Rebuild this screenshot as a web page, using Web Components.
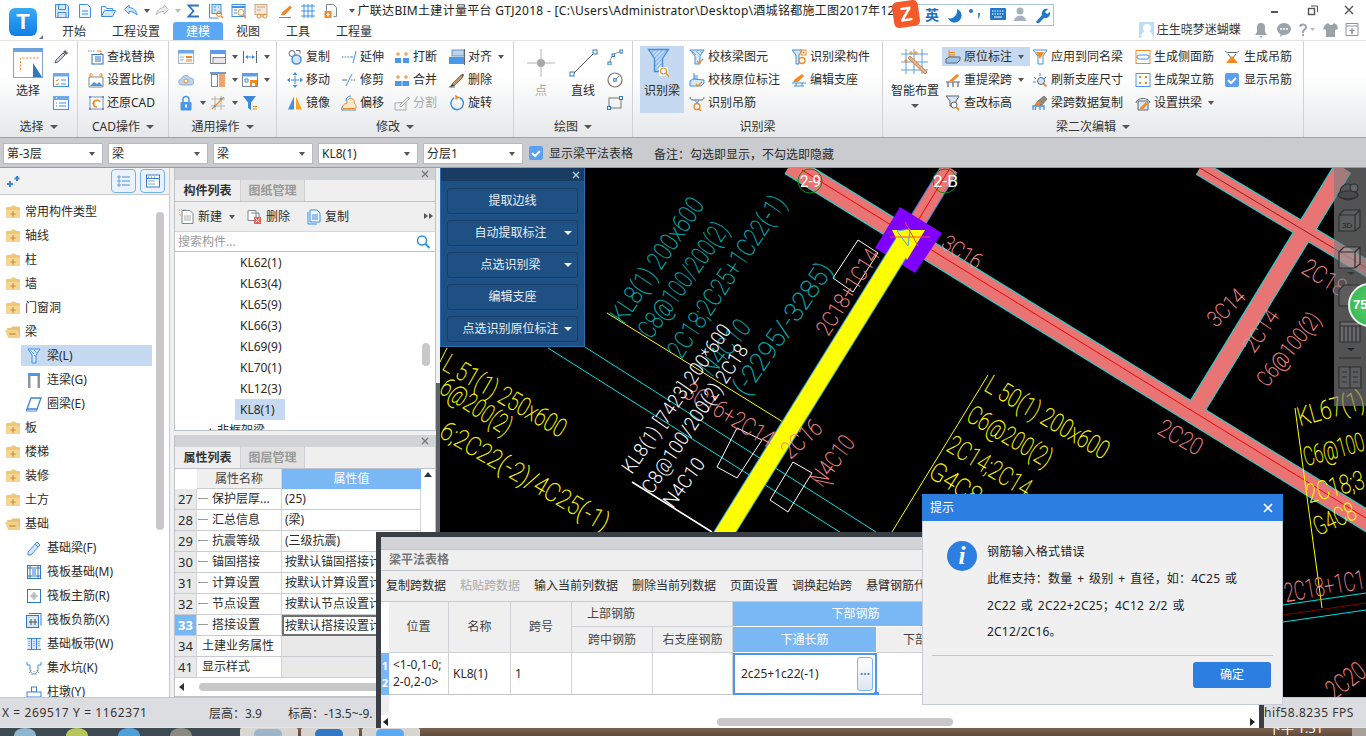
<!DOCTYPE html>
<html lang="zh">
<head>
<meta charset="utf-8">
<title>GTJ2018</title>
<style>
  html,body{margin:0;padding:0;width:1366px;height:736px;overflow:hidden;background:#dcdde0;}
  body{position:relative;font:12px/16px "Noto Sans","Noto Sans CJK SC",sans-serif;color:#2b2b2b;}
</style>
</head>
<body>
<gtj-app>
  <gtj-title-bar slot="top"></gtj-title-bar>
  <gtj-ribbon slot="top">
    <rb-group label="选择" arrow w="78">
      <rb-big icon="sel" label="选择" style="margin-left:6px;width:44px"></rb-big>
      <rb-col style="margin-left:3px;width:24px">
        <rb-item icon="pick"></rb-item><rb-item icon="chk"></rb-item><rb-item icon="lst"></rb-item>
      </rb-col>
    </rb-group>
    <rb-group label="CAD操作" arrow w="91">
      <rb-col style="margin-left:10px;width:80px">
        <rb-item icon="find" label="查找替换"></rb-item><rb-item icon="scale" label="设置比例"></rb-item><rb-item icon="restore" label="还原CAD"></rb-item>
      </rb-col>
    </rb-group>
    <rb-group label="通用操作" arrow w="108">
      <rb-col style="margin-left:9px;width:32px">
        <rb-item icon="panel"></rb-item><rb-item icon="cloud"></rb-item><rb-item icon="lock" arrow></rb-item>
      </rb-col>
      <rb-col style="width:32px">
        <rb-item icon="win2" arrow></rb-item><rb-item icon="col2" arrow></rb-item><rb-item icon="cross" arrow></rb-item>
      </rb-col>
      <rb-col style="width:32px">
        <rb-item icon="dim" arrow></rb-item><rb-item icon="savew" arrow></rb-item><rb-item icon="filter"></rb-item>
      </rb-col>
    </rb-group>
    <rb-group label="修改" arrow w="237">
      <rb-col style="margin-left:10px;width:54px">
        <rb-item icon="copy" label="复制"></rb-item><rb-item icon="move" label="移动"></rb-item><rb-item icon="mirror" label="镜像"></rb-item>
      </rb-col>
      <rb-col style="width:53px">
        <rb-item icon="extend" label="延伸"></rb-item><rb-item icon="trim" label="修剪"></rb-item><rb-item icon="offset" label="偏移"></rb-item>
      </rb-col>
      <rb-col style="width:55px">
        <rb-item icon="brk" label="打断"></rb-item><rb-item icon="merge" label="合并"></rb-item><rb-item icon="split" label="分割" disabled></rb-item>
      </rb-col>
      <rb-col style="width:60px">
        <rb-item icon="align" label="对齐" arrow></rb-item><rb-item icon="del" label="删除"></rb-item><rb-item icon="rot" label="旋转"></rb-item>
      </rb-col>
    </rb-group>
    <rb-group label="绘图" arrow w="119">
      <rb-big icon="point" label="点" disabled style="margin-left:6px;width:42px"></rb-big>
      <rb-big icon="line" label="直线" style="width:42px"></rb-big>
      <rb-col style="margin-left:3px;width:24px">
        <rb-item icon="arc"></rb-item><rb-item icon="circ"></rb-item><rb-item icon="rect"></rb-item>
      </rb-col>
    </rb-group>
    <rb-group label="识别梁" w="250">
      <rb-big icon="beamfind" label="识别梁" active style="margin-left:7px;width:44px"></rb-big>
      <rb-col style="margin-left:5px;width:102px">
        <rb-item icon="chkbeam" label="校核梁图元"></rb-item><rb-item icon="chkmark" label="校核原位标注"></rb-item><rb-item icon="hang" label="识别吊筋"></rb-item>
      </rb-col>
      <rb-col style="width:90px">
        <rb-item icon="beamcomp" label="识别梁构件"></rb-item><rb-item icon="seat" label="编辑支座"></rb-item>
      </rb-col>
    </rb-group>
    <rb-group label="梁二次编辑" arrow w="421">
      <rb-big icon="smart" label="智能布置" arrow style="margin-left:8px;width:48px"></rb-big>
      <rb-col style="margin-left:3px;width:90px">
        <rb-item icon="mark" label="原位标注" arrow active pad></rb-item><rb-item icon="respan" label="重提梁跨" arrow pad></rb-item><rb-item icon="elev" label="查改标高" pad></rb-item>
      </rb-col>
      <rb-col style="width:103px">
        <rb-item icon="apply" label="应用到同名梁"></rb-item><rb-item icon="refresh" label="刷新支座尺寸"></rb-item><rb-item icon="brush" label="梁跨数据复制"></rb-item>
      </rb-col>
      <rb-col style="width:89px">
        <rb-item icon="side" label="生成侧面筋"></rb-item><rb-item icon="stand" label="生成架立筋"></rb-item><rb-item icon="arch" label="设置拱梁" arrow></rb-item>
      </rb-col>
      <rb-col style="width:76px">
        <rb-item icon="hang2" label="生成吊筋" gap="4"></rb-item><rb-item icon="check" label="显示吊筋" gap="4"></rb-item>
      </rb-col>
    </rb-group>
  </gtj-ribbon>
  <gtj-filter-bar slot="top">
    <gtj-combo>第-3层</gtj-combo><gtj-combo>梁</gtj-combo><gtj-combo>梁</gtj-combo><gtj-combo>KL8(1)</gtj-combo><gtj-combo>分层1</gtj-combo>
  </gtj-filter-bar>

  <gtj-tree slot="left">
    <gtj-tree-row icon="fold">常用构件类型</gtj-tree-row>
    <gtj-tree-row icon="fold">轴线</gtj-tree-row>
    <gtj-tree-row icon="fold">柱</gtj-tree-row>
    <gtj-tree-row icon="fold">墙</gtj-tree-row>
    <gtj-tree-row icon="fold">门窗洞</gtj-tree-row>
    <gtj-tree-row icon="foldo">梁</gtj-tree-row>
    <gtj-tree-row icon="t-beam" sub active>梁(L)</gtj-tree-row>
    <gtj-tree-row icon="t-link" sub>连梁(G)</gtj-tree-row>
    <gtj-tree-row icon="t-ring" sub>圈梁(E)</gtj-tree-row>
    <gtj-tree-row icon="fold">板</gtj-tree-row>
    <gtj-tree-row icon="fold">楼梯</gtj-tree-row>
    <gtj-tree-row icon="fold">装修</gtj-tree-row>
    <gtj-tree-row icon="fold">土方</gtj-tree-row>
    <gtj-tree-row icon="foldo">基础</gtj-tree-row>
    <gtj-tree-row icon="t-fb" sub>基础梁(F)</gtj-tree-row>
    <gtj-tree-row icon="t-raft" sub>筏板基础(M)</gtj-tree-row>
    <gtj-tree-row icon="t-main" sub>筏板主筋(R)</gtj-tree-row>
    <gtj-tree-row icon="t-neg" sub>筏板负筋(X)</gtj-tree-row>
    <gtj-tree-row icon="t-band" sub>基础板带(W)</gtj-tree-row>
    <gtj-tree-row icon="t-pit" sub>集水坑(K)</gtj-tree-row>
    <gtj-tree-row icon="t-pier" sub>柱墩(Y)</gtj-tree-row>
  </gtj-tree>

  <gtj-side slot="mid">
    <gtj-comp-panel></gtj-comp-panel>
    <gtj-prop-panel></gtj-prop-panel>
  </gtj-side>

  <gtj-canvas slot="canvas">
    <gtj-tool-panel></gtj-tool-panel>
    <gtj-view-bar></gtj-view-bar>
  </gtj-canvas>

  <gtj-status slot="status"></gtj-status>
  <gtj-taskbar slot="task"></gtj-taskbar>

  <gtj-ime slot="over"></gtj-ime>
  <gtj-table-window slot="over"></gtj-table-window>
  <gtj-dialog slot="over"></gtj-dialog>
</gtj-app>

<script>
const B='#3f8fe6',O='#f5891f',G='#7b8794',LB='#d6e6f9',D='#5c6670';
const ICONS={
  save:`<path d="M1.5 1.5h11l2 2v11h-13z" fill="${LB}" stroke="${B}"/><path d="M4.5 1.5v5h7v-5M4 14.5v-5h8v5" stroke="${B}"/>`,
  newf:`<path d="M2.5 1.5h8l3 3v10h-11z" fill="#eef5fd" stroke="${B}"/><path d="M5 8h6M5 11h6" stroke="${B}"/>`,
  open:`<path d="M1.5 13.5v-10h4l1 2h6v2" stroke="${B}"/><path d="M1.5 13.5l3-6h11l-3 6z" fill="${LB}" stroke="${B}"/>`,
  undo:`<path d="M6 2L1.5 6.5 6 11V8.5c3 0 5 .5 8 3.5C13.5 8 10.5 4.7 6 4.5z" fill="${LB}" stroke="${B}"/>`,
  redo:`<path d="M10 2l4.5 4.5L10 11V8.5c-3 0-5 .5-8 3.5C2.500 8 5.500 4.7 10 4.500z" fill="#eee" stroke="#bbb"/>`,
  sigma:`<path d="M13 3.500V2.500H3.500L8.500 8l-5 5.500H13V12.500" stroke="#2f6fc0" stroke-width="1.800"/>`,
  qa1:`<path d="M1.500 1v14h9" stroke="${B}"/><rect x="4" y="1.500" width="9" height="9" fill="${LB}" stroke="${B}"/><path d="M6 4h2M6 7h2M10 4h1" stroke="${B}"/><circle cx="11" cy="11" r="2.500" stroke="${O}"/><path d="M13 13l2 2" stroke="${O}" stroke-width="1.500"/>`,
  qa2:`<rect x="1" y="1.500" width="13" height="12" fill="#fff" stroke="${B}"/><path d="M1 4h13" stroke="${B}" stroke-width="2"/><path d="M3 7h3M3 10h3" stroke="${B}"/><circle cx="10" cy="9.500" r="3" stroke="${O}"/><path d="M12 12l3 3" stroke="${O}" stroke-width="1.500"/>`,
  qa3:`<rect x="1" y="1.500" width="12" height="10" fill="#f6e9dc" stroke="#c9a78a"/><path d="M3 4h8M3 7h4" stroke="#c9a78a"/><circle cx="5" cy="13" r="2" stroke="${O}"/><circle cx="11" cy="13" r="2" stroke="${O}"/><path d="M7 13h2" stroke="${O}"/>`,
  pen:`<path d="M2 14.500h12" stroke="${G}"/><path d="M4 12l2-3 7-6 1.500 1.500-6.500 7z" fill="${O}" stroke="#c5651a" stroke-width=".5"/>`,
  gridq:`<path d="M1 3h14M1 8h14M1 13h14M4 1v14M8 1v14M12 1v14" stroke="${B}"/>`,
  addf:`<path d="M3.500 1.500h7l3 3v9h-3M3.500 8V1.500" stroke="${G}"/><rect x="1.500" y="8" width="7" height="7" fill="${O}"/><path d="M5 9.500v4M3 11.500h4" stroke="#fff" stroke-width="1.200"/>`,

  sel:`<rect x=".5" y=".5" width="29" height="29" fill="#fff" stroke="#7da7d6"/><rect x="0" y="0" width="30" height="4" fill="#6ea3dc"/><path d="M7.500 22V10H26" stroke="${O}" stroke-dasharray="2 1.500"/><path d="M20 15v14h9z" fill="#2f79c4"/>`,
  pick:`<path d="M2 14l1-3 7-7 2 2-7 7z" fill="#cfd4d9" stroke="${D}"/><path d="M10 3l2-2 3 3-2 2z" fill="${D}"/>`,
  chk:`<rect x=".5" y="1.500" width="15" height="13" fill="#fff" stroke="${B}"/><rect x="0" y="1" width="16" height="3.500" fill="#6ea9e8"/><path d="M3 8l1 1 1.500-2M3 12l1 1 1.500-2" stroke="${O}"/><path d="M8 8h5M8 12h5" stroke="${B}"/>`,
  lst:`<rect x=".5" y="1.500" width="15" height="13" fill="#fff" stroke="${B}"/><rect x="0" y="1" width="16" height="4" fill="#6ea9e8"/><path d="M3 8h1M3 11h1M6 8h7M6 11h7" stroke="${B}"/><path d="M3 3h1" stroke="#fff"/>`,
  find:`<path d="M0 2h7" stroke="${G}" stroke-dasharray="1.500 1"/><rect x="4" y="5.500" width="11" height="9.500" fill="#fff" stroke="#2f6fc0"/><path d="M7 8h6M7 10h6M7 12h6" stroke="#2f6fc0"/><path d="M9 2h4v3" stroke="${O}"/><path d="M11.500 4l1.500 2 1.500-2z" fill="${O}"/>`,
  scale:`<path d="M1 5h14v10H1z" fill="#fff" stroke="${G}"/><path d="M2 14l4-4 3 2 2-2 4 4z" fill="#4d94e0"/><path d="M2 3h3M14 3h-3M3.500 1l-2 2 2 2M12.500 1l2 2-2 2" stroke="${O}"/>`,
  restore:`<rect x="2" y="2" width="13" height="12" fill="#fff" stroke="#6c91bd"/><path d="M1 1h2v2H1zM14 1h2v2h-2zM1 13h2v2H1zM14 13h2v2h-2z" fill="#6c91bd"/><path d="M12 7a3.500 3.500 0 1 0-3 5" stroke="${O}" stroke-width="1.500"/><path d="M4 9l3 .5L6 6z" fill="${O}"/>`,
  panel:`<rect x=".5" y="1.500" width="15" height="13" fill="#f8f9fa" stroke="#a6b8cc"/><rect x="0" y="1" width="16" height="3.500" fill="#6ea9e8"/><rect x="8" y="7" width="6" height="2" fill="${O}"/><rect x="8" y="10" width="6" height="3" fill="#f2c28a"/><path d="M2 8h4M2 11h4" stroke="#a6b8cc"/>`,
  cloud:`<path d="M4 13a3 3 0 0 1-.5-6A4.500 4.500 0 0 1 12 6a3.500 3.500 0 0 1 1 7z" fill="#b9d4f2" stroke="#8ab2dd"/><circle cx="8" cy="9" r="2" fill="#fff" stroke="${O}"/>`,
  lock:`<rect x="2.500" y="7" width="11" height="8.500" rx="1" fill="#4a98ea"/><path d="M5 7V4.500a3 3 0 0 1 6 0V7" stroke="#4a98ea" stroke-width="1.500"/><rect x="7" y="9.500" width="2" height="3" fill="#fff"/>`,
  win2:`<rect x=".5" y="1.500" width="15" height="13" fill="#fff" stroke="#7d8792"/><rect x="0" y="1" width="16" height="4" fill="#5c9fe8"/><rect x="3" y="8.500" width="12.500" height="6" fill="#e6e8ea" stroke="#7d8792"/>`,
  col2:`<path d="M0 1h16" stroke="#3c78c0" stroke-width="1.500"/><rect x="1.500" y="2.500" width="6" height="12" fill="#fff" stroke="#7d8792"/><rect x="9" y="2" width="6" height="13" fill="#f2a36b"/>`,
  cross:`<path d="M1 4h14M1 11h14M5 1v14M11 1v14" stroke="#bcb2a8"/><path d="M2 14L14 2" stroke="${O}" stroke-width="1.300"/><circle cx="5" cy="11" r="1.300" fill="#5c9fe8"/><circle cx="11" cy="4" r="1.300" fill="#5c9fe8"/>`,
  dim:`<path d="M1.500 2v12M14.500 2v12" stroke="${D}"/><path d="M4 8h8" stroke="${B}"/><path d="M6 6l-3 2 3 2zM10 6l3 2-3 2z" fill="${B}"/>`,
  savew:`<rect x=".5" y="1.500" width="15" height="13" fill="#fff" stroke="#7d8792"/><rect x="0" y="1" width="16" height="3.500" fill="#5c9fe8"/><path d="M3 7h3v3H3z" stroke="${B}"/><rect x="8" y="8" width="7" height="6" fill="${O}"/><rect x="10" y="11" width="3" height="3" fill="#fff"/>`,
  filter:`<path d="M1 1h13L9 7.500V15l-3-2V7.500z" fill="#3c88dc"/><path d="M11 11.500h4M11 14h4" stroke="${O}" stroke-width="1.200"/>`,
  copy:`<circle cx="5" cy="4.500" r="3" fill="#fff" stroke="${D}"/><circle cx="9.500" cy="10.500" r="4.500" fill="${LB}" stroke="${B}" stroke-width="1.500"/><path d="M9 1.500h4v3" stroke="${D}"/>`,
  move:`<path d="M8 4v8M4 8h8" stroke="${B}"/><path d="M8 0l2.500 3h-5zM8 16l2.500-3h-5zM0 8l3-2.500v5zM16 8l-3-2.500v5z" fill="${B}"/>`,
  mirror:`<path d="M7 1.500v13H1z" fill="#3f8fe6"/><path d="M9 1.500v13h6z" fill="#f5a623"/><path d="M8 0v16" stroke="#fff"/>`,
  extend:`<path d="M1 8h8" stroke="${D}" stroke-dasharray="1.500 1.200"/><path d="M9 8h3" stroke="${B}"/><path d="M15 2l-3 12" stroke="${B}"/>`,
  trim:`<path d="M1 8h5" stroke="${D}"/><path d="M10 8h5" stroke="${D}" stroke-dasharray="1.500 1.200"/><path d="M5 14L11 2" stroke="${B}"/>`,
  offset:`<path d="M2 13.500c-1-3 1-5 4-5 -1-5 5-7 7-3 .5 1 0 2 0 3 2 0 3 5 1 5z" fill="#fdeacb" stroke="${O}"/><path d="M1 15h14" stroke="${B}"/><path d="M1 15c-1-2 0-3 1-4M5 6c0-3 2-5 5-5" stroke="${B}"/>`,
  brk:`<rect x="1" y="9" width="6" height="5" fill="#4a98ea"/><rect x="9" y="9" width="6" height="5" fill="#4a98ea"/><path d="M4 3v4M2 5h4M12 3v4M10 5h4" stroke="${O}"/>`,
  merge:`<rect x="1" y="9" width="14" height="5" fill="#4a98ea"/><path d="M8 9v5" stroke="#cfe2f8"/><path d="M4 3v4M2 5h4M12 3v4M10 5h4" stroke="${O}"/>`,
  split:`<path d="M1 15V8l11-1v8z" fill="#f2f2f2" stroke="#aaa"/><path d="M6 10l8-8 1.500 1.500-8 8H6z" fill="#eee" stroke="#aaa"/>`,
  align:`<rect x="3" y="1" width="12" height="6" fill="#bcd3ee" stroke="#6c91bd"/><rect x="0" y="8" width="15" height="7" fill="#4a98ea"/><path d="M15.500 0v16" stroke="${D}"/>`,
  del:`<path d="M0 15h6" stroke="${D}"/><path d="M3 12l9-9 2 2-9 9z" fill="#c4915e" stroke="#7a5634" stroke-width=".7"/><path d="M1 15l2-3 2 2z" fill="#333"/><path d="M12 3l1.500-1.500 1.500 1.500L14 5z" fill="#555"/>`,
  rot:`<path d="M10.500 2.500a6.300 6.300 0 1 1-5.500 .4" stroke="#3f8fe6" stroke-width="1.500"/><path d="M6 0l5 2.500-4.500 2z" fill="${O}"/>`,
  point:`<path d="M15 1v28M1 15h28" stroke="#b4b4b4"/><circle cx="15" cy="15" r="4" fill="#a8a8a8"/>`,
  line:`<path d="M4.500 26.500L26.500 4.500" stroke="#555"/><rect x="2" y="24" width="4" height="4" fill="#fff" stroke="#2f79c4"/><rect x="25" y="2" width="4" height="4" fill="#fff" stroke="#2f79c4"/>`,
  arc:`<path d="M3 14c0-6 5-11 11-11" stroke="#888"/><rect x="1" y="13" width="3" height="3" fill="#fff" stroke="#2f79c4"/><rect x="13" y="1" width="3" height="3" fill="#fff" stroke="#2f79c4"/><rect x="5" y="5" width="2.500" height="2.500" fill="#fff" stroke="#2f79c4"/>`,
  circ:`<circle cx="8" cy="8" r="7" fill="#fff" stroke="#777" stroke-width="1.200"/><path d="M8 8l4-4" stroke="#777"/><rect x="6.700" y="6.700" width="2.500" height="2.500" fill="#fff" stroke="#2f79c4"/>`,
  rect:`<rect x="2" y="3" width="12" height="10" stroke="#777"/><rect x=".5" y="11.500" width="3" height="3" fill="#fff" stroke="#2f79c4"/><rect x="12.500" y="1.500" width="3" height="3" fill="#fff" stroke="#2f79c4"/>`,
  beamfind:`<defs><pattern id="h" width="3" height="3" patternUnits="userSpaceOnUse" patternTransform="rotate(45)"><path d="M0 0v3" stroke="${B}"/></pattern></defs><path d="M1.500 1.500h20l-6 9v13h-8v-13z" fill="url(#h)" stroke="${B}" stroke-width="1.300"/><rect x="12" y="19" width="9" height="9" fill="#fff"/><circle cx="16.500" cy="23" r="3" stroke="${O}" stroke-width="1.200"/><path d="M19 25.500l3 3" stroke="${O}" stroke-width="1.500"/>`,
  chkbeam:`<path d="M1 1h14l-4 6v8H6V7z" fill="${LB}" stroke="${B}"/><path d="M3 2l4 4M7 2l4 4M11 2l2 2" stroke="${B}" stroke-width=".7"/><path d="M8 12l2 2 4-4" stroke="${O}" stroke-width="1.300"/>`,
  chkmark:`<path d="M5 1v7h7M5 4h4M5 6h4" stroke="${B}"/><path d="M1 9l3-2 11 1v3l-3 3H1z" fill="${LB}" stroke="${B}"/><path d="M7 12l2 2 4-4" stroke="${O}" stroke-width="1.300"/>`,
  hang:`<path d="M1 2c0 2 1 3 3 3h8c2 0 3-1 3-3" stroke="${D}"/><path d="M6 5l2 3 2-3" stroke="${B}"/><circle cx="8" cy="11.500" r="3" stroke="${O}" stroke-width="1.300"/><path d="M10 14l2 2" stroke="${O}" stroke-width="1.500"/>`,
  beamcomp:`<path d="M1 1h10l-3 5v9H5V6z" fill="${LB}" stroke="${B}"/><rect x="10" y="1" width="5" height="5" stroke="${O}"/><rect x="12" y="3" width="1" height="1" stroke="${O}"/><circle cx="11" cy="11.500" r="3" fill="#fff" stroke="${O}" stroke-width="1.300"/>`,
  seat:`<path d="M1 11h14M3 14h10" stroke="${B}"/><path d="M2 10l2-3 7-5 2 2-6 6z" fill="${O}"/><path d="M5 11v3M11 11v3" stroke="${B}"/>`,
  smart:`<path d="M6 1v25M14 1v25M22 1v25M1 6h27M1 14h27M1 22h27" stroke="#5c9fe8"/><path d="M10 8l17 16-2 2L8 10z" fill="#f5b27c" stroke="#a7663a" stroke-width=".7"/><path d="M11 3v4M9 5h4M6 11v4M4 13h4M16 3v4M14 5h4" stroke="${O}"/>`,
  mark:`<path d="M4 1v7h7M4 3.500h6M4 6h6" stroke="${O}"/><path d="M1 10l3-2h11v3l-3 3H1z" fill="#9fc4ec" stroke="${D}"/>`,
  respan:`<path d="M1 10h14M3 10v5M8 10v5M13 10v5" stroke="${D}" stroke-width="1.200"/><path d="M4 9l8-7 2 2-7 6z" fill="${O}"/>`,
  elev:`<path d="M1 1h13l-3 5v5H5V6z" fill="${LB}" stroke="${D}"/><circle cx="9" cy="10" r="3" fill="#fff" stroke="${D}"/><path d="M11 12l3 3" stroke="${O}" stroke-width="2"/>`,
  apply:`<path d="M1 1h14l-4 6v8H6V7z" fill="#fff" stroke="${B}"/><path d="M4 3h8L8 10z" fill="${O}"/>`,
  refresh:`<circle cx="9" cy="9" r="3.500" fill="${LB}" stroke="${D}"/><path d="M11.500 11.500l3 3" stroke="${O}" stroke-width="1.800"/><path d="M8 1v3M2 5l2 2M14 5l-2 2M1 10h3" stroke="${B}"/>`,
  brush:`<path d="M1 15v-4h11v4M3.500 15v-3M8 15v-3" stroke="${B}" stroke-width="1.300"/><path d="M3 10l3-4 6-5 3 3-5 6z" fill="#9a8a7a" stroke="#555" stroke-width=".6"/><path d="M3 10l3-4 3 3-3 2z" fill="${O}"/>`,
  side:`<rect x="1" y="1.500" width="14" height="13" stroke="${O}"/><path d="M4 6h8M4 10h8M4 6a1 1 0 0 0 0 4M12 6a1 1 0 0 1 0 4" stroke="${B}"/>`,
  stand:`<rect x="1" y="1.500" width="14" height="13" stroke="#4a98ea"/><path d="M4 4h2v2H4zM10 4h2v2h-2zM4 10h2v2H4zM10 10h2v2h-2z" fill="${O}"/>`,
  arch:`<path d="M1 8C1 2 15 2 15 8" stroke="${D}"/><path d="M3 6h10v9H3z" fill="${LB}" stroke="${D}"/><path d="M5 13l6-6 2 2-5 5H5z" fill="${O}"/>`,
  hang2:`<path d="M1 2c1 1 2 1.500 3 1.500h8c1 0 2-.5 3-1.500" stroke="${D}"/><path d="M4 5l4 5 4-5" stroke="${D}"/><path d="M2 14h12L8 7z" fill="${O}"/>`,
  check:`<rect x="1" y="1" width="14" height="14" rx="2" fill="#5a9ff0"/><path d="M4 8l3 3 5-5" stroke="#fff" stroke-width="2"/>`,

  fold:`<path d="M1 4.500c0-1 .5-1.500 1.500-1.500H6l1-1.500h3L11 3h2.500c1 0 1.500 .5 1.500 1.500V14H1z" fill="#f0c878"/><path d="M1 6h14v8H1z" fill="#f5d592"/><path d="M8 7.500v5M5.500 10h5" stroke="#c28f38" stroke-width="1.200"/>`,
  foldo:`<path d="M2 4h4l1-1.500h8V13H3z" fill="#e9c176"/><path d="M0 6h13l2 8H3z" fill="#f3d08a"/><path d="M4.500 10h6" stroke="#c28f38" stroke-width="1.300"/>`,
  't-beam':`<path d="M2 1h12l-4 6v8H6V7z" fill="${LB}" stroke="${B}"/><path d="M4 2l4 4M8 2l3 3M8 7l2 2" stroke="${B}" stroke-width=".7"/>`,
  't-link':`<rect x="2" y="1" width="12" height="3" fill="#4a98ea"/><rect x="2" y="4" width="2.500" height="12" fill="#8c949c"/><rect x="11.500" y="4" width="2.500" height="12" fill="#8c949c"/>`,
  't-ring':`<path d="M5 2h10l-4 11H1z" fill="#fff" stroke="#3c84d2" stroke-width="1.300"/><path d="M1 13l-.5 2h10l.5-2" stroke="#3c84d2"/>`,
  't-fb':`<path d="M2 12L11 2l3 3-9 10H2z" fill="${LB}" stroke="${B}"/><path d="M9 4l3 3" stroke="${B}"/>`,
  't-raft':`<rect x="1.500" y="1.500" width="13" height="13" stroke="#2f79c4"/><path d="M1.500 4h13M1.500 12h13M4 1.500v13M12 1.500v13M6 6h4M6 8h4M6 10h4" stroke="#2f79c4"/>`,
  't-main':`<rect x="1.500" y="1.500" width="13" height="13" stroke="#2f79c4"/><path d="M8 4v8M4 8h8" stroke="#999"/><path d="M6 6h4v4H6z" stroke="#bbb"/>`,
  't-neg':`<rect x=".5" y="3.500" width="12" height="12" fill="${LB}" stroke="#2f79c4"/><path d="M3 1.500h12v12" stroke="#2f79c4"/><path d="M5 7v6M9 7v6M3 10h8" stroke="#555"/>`,
  't-band':`<rect x="1.500" y="2.500" width="13" height="11" fill="${LB}"/><path d="M1 2.500h14M1 13.500h14M5.500 3v10M10.500 3v10" stroke="#3c84d2"/><path d="M3 5v6M8 5v6M13 5v6" stroke="#3c84d2" stroke-dasharray="1 1"/>`,
  't-pit':`<path d="M1 2v3h3v4c0 3 2 5 4 5s4-2 4-5V5h3V2" stroke="${B}"/><path d="M3 12l1 1M6 14v1M10 14v1M13 12l-1 1M5 10v1M8 11v1M11 10v1" stroke="#999"/>`,
  't-pier':`<rect x="5.500" y="3" width="5" height="5" fill="#fff" stroke="#3c84d2"/><rect x="1" y="8" width="14" height="5" fill="#fff" stroke="#3c84d2"/>`,

  plus2:`<path d="M4 8v6M1 11h6M11 3v5M8.500 5.500h5" stroke="#3c84d2" stroke-width="2"/>`,
  listv:`<path d="M2 3h2v2H2zM2 7h2v2H2zM2 11h2v2H2z" stroke="#4a8fd8" stroke-width=".8"/><path d="M6 4h8M6 8h8M6 12h8" stroke="#4a8fd8"/>`,
  cardv:`<rect x="1.500" y="2" width="13" height="12" fill="#fff" stroke="#3c7fc8"/><path d="M1.500 5.500h13" stroke="#3c7fc8"/><path d="M3 4h1M6 4h1M9 4h1" stroke="#3c7fc8"/><path d="M3 8h7M3 11h7" stroke="#79aee5"/>`,
  newc:`<rect x="0" y="0" width="6" height="6" fill="none" stroke="#f29433" stroke-dasharray="1 1"/><path d="M3 1.500h8l3 3v10H3z" fill="#fff" stroke="${G}"/><path d="M5 7h7M5 9h7M5 11h7" stroke="#aaa"/>`,
  delc:`<path d="M1 1.500h8v10H1z" fill="#fff" stroke="${G}"/><path d="M4 4h8v4" stroke="${G}"/><rect x="7" y="8" width="7" height="7" fill="#e0625c"/><path d="M8.500 9.500l4 4M12.500 9.500l-4 4" stroke="#fff"/>`,
  copyc:`<path d="M2 3v12h9" stroke="${B}"/><path d="M4 1h7l3 3v9H4z" fill="#eef5fd" stroke="${B}"/><path d="M6 6h6M6 8h6M6 10h6" stroke="${B}"/>`,
  search:`<circle cx="7" cy="6.500" r="4.500" stroke="#2f8fd8" stroke-width="1.500"/><path d="M10.500 10l4 4" stroke="#2f8fd8" stroke-width="2"/>`,
};
// full-width marks sit centred in the reference, the TC face draws them that way
const P = c => `<b style="font:inherit;font-family:'Noto Sans CJK TC'">${c}</b>`;

class GtjIcon extends HTMLElement {
  connectedCallback() {
    if (this.shadowRoot) return;
    const s = this.getAttribute('s') || 16;
    const v = this.getAttribute('v') || 16;
    const root = this.attachShadow({ mode: 'open' });
    root.innerHTML = `<style>:host{display:inline-block;width:${s}px;height:${s}px;flex:none}svg{display:block}</style>
      <svg width="${s}" height="${s}" viewBox="0 0 ${v} ${v}" fill="none">${ICONS[this.getAttribute('n')] || ''}</svg>`;
  }
}

class GtjApp extends HTMLElement {
  connectedCallback() {
    const root = this.attachShadow({ mode: 'open' });
    root.innerHTML = `<style>
      :host{display:flex;flex-direction:column;width:1366px;height:736px;position:relative;overflow:hidden}
      .main{display:flex;height:529px;background:#f0f0f0}
      .dv{width:4px;flex:none}
      .dv2{width:4px;flex:none;background:linear-gradient(#f0f0f0 215px,#5d6268 215px)}
    </style>
    <slot name="top"></slot>
    <div class="main"><slot name="left"></slot><div class="dv"></div><slot name="mid"></slot><div class="dv2"></div><slot name="canvas"></slot></div>
    <slot name="status"></slot>
    <slot name="task"></slot>
    <slot name="over"></slot>`;
  }
}

class GtjTitleBar extends HTMLElement {
  connectedCallback() {
    const root = this.attachShadow({ mode: 'open' });
    const qa = n => `<span class="q"><gtj-icon n="${n}"></gtj-icon></span>`;
    const tabs = ['开始','工程设置','建模','视图','工具','工程量'];
    root.innerHTML = `<style>
      :host{display:flex;height:40px;background:#fff;position:relative}
      .logo{width:49px;height:40px;flex:none;display:flex;justify-content:center;padding:8px 3px 0 0;box-sizing:border-box;position:relative}
      .logo .t{width:28px;height:28px;border-radius:6px;background:linear-gradient(#3aa9f5,#0f7fe8);color:#fff;font:bold 22px/28px "Liberation Sans",sans-serif;text-align:center}
      .logo i{position:absolute;right:6px;bottom:1px;border-left:4px solid transparent;border-bottom:4px solid #777}
      .col{flex:1;display:flex;flex-direction:column;min-width:0}
      .r1{height:22px;display:flex;align-items:center;padding-left:1.500px;white-space:nowrap;overflow:hidden;width:844px}
      .q{width:23px;display:flex;justify-content:center;flex:none}
      .a{width:8px;flex:none;display:flex;justify-content:center}
      .a i{display:block;border-left:3px solid transparent;border-right:3px solid transparent;border-top:4px solid #555}
      .a.g i{border-top-color:#bbb}
      .title{margin-left:2px;line-height:22px;color:#222;letter-spacing:.3px}
      .r2{height:18px;display:flex}
      .tab{padding:0 13px;line-height:19px;height:18px;color:#333}
      .tab.on{background:#5ba8f5;color:#fff;border-radius:3px 3px 0 0}
      .ctl{position:absolute;right:0;top:0;width:230px;height:40px}
      .win{position:absolute;right:11px;top:3px;display:flex;gap:24px;align-items:center;height:14px}
      .user{position:absolute;left:3px;top:22px;display:flex;align-items:center;height:16px;width:100%;line-height:18px}
      .name{margin-left:3px;width:96px;color:#333;white-space:nowrap}
      .av{width:16px;height:16px;background:#bcdcf7;position:relative;overflow:hidden}
      .av::after{content:"";position:absolute;left:4px;top:2px;width:8px;height:8px;border-radius:50%;background:#fff;box-shadow:0 9px 0 2px #fff}
    </style>
    <div class="logo"><div class="t">T</div><i></i></div>
    <div class="col">
      <div class="r1">
        ${qa('save')}${qa('newf')}${qa('open')}${qa('undo')}<span class="a"><i></i></span>${qa('redo')}<span class="a g"><i></i></span>
        <span style="width:2px"></span>${qa('sigma')}${qa('qa1')}${qa('qa2')}${qa('qa3')}${qa('pen')}${qa('gridq')}${qa('addf')}
        <span class="a" style="margin-left:5px"><i></i></span>
        <span class="title">广联达BIM土建计量平台 GTJ2018 - [C:\\Users\\Administrator\\Desktop\\酒城铭都施工图2017年12月</span>
      </div>
      <div class="r2">${tabs.map(t => `<div class="tab${t=='建模'?' on':''}">${t}</div>`).join('')}</div>
    </div>
    <div class="ctl">
      <div class="win">
        <svg width="12" height="12"><path d="M0 8h7" stroke="#555" stroke-width="2"/></svg>
        <svg width="12" height="12" fill="none" stroke="#555"><rect x="1.500" y="4.500" width="6" height="6" stroke-width="1.400"/><path d="M4 2h6.500v6"/></svg>
        <svg width="12" height="12" stroke="#555" stroke-width="1.400"><path d="M2 2l8 8M10 2l-8 8"/></svg>
      </div>
      <div class="user">
        <div class="av"></div><div class="name">庄生晓梦迷蝴蝶</div>
        <svg width="124" height="16" fill="#9ba2a8" style="margin-left:10px">
          <path d="M6 1a4 4 0 0 1 4 4v5l2 3H0l2-3V5a4 4 0 0 1 4-4zM4.500 14h3l-1.500 2z"/>
          <ellipse cx="29" cy="7" rx="7" ry="6"/><path d="M26 11l-1 4 4-3z"/><circle cx="26" cy="7" r="1" fill="#fff"/><circle cx="29" cy="7" r="1" fill="#fff"/><circle cx="32" cy="7" r="1" fill="#fff"/>
          <path d="M44 4c1-4 8-3 8 1 0 3-3 3-3 6h-2c0-4 3-4 3-6 0-2-3-2-4 0zM47 12h2v2h-2z"/><path d="M55 6h5l-2.500 3z" fill="#bbb"/>
          <path d="M70 3l3-2 2 2h2l2-2 3 2 1 4-3 1v7h-9V8l-3-1z"/>
          <path d="M91 1.500h12v12H91z" fill="none" stroke="#8d949a"/><path d="M91 4h12" stroke="#8d949a"/><path d="M97 6l-3 3h2v3h2V9h2z"/>
        </svg>
      </div>
    </div>`;
  }
}

class GtjIme extends HTMLElement {
  connectedCallback() {
    const root = this.attachShadow({ mode: 'open' });
    root.innerHTML = `<style>
      :host{position:absolute;left:893px;top:0;width:161px;height:28px;display:block}
      .z{position:absolute;left:0;top:1px;width:26px;height:26px;background:#f4592a;border-radius:5px;transform:rotate(-8deg);color:#fff;font:bold 20px/26px "Liberation Sans",sans-serif;text-align:center}
      .bar{position:absolute;left:23px;top:4px;right:0;height:22px;box-sizing:border-box;background:#fff;border:1px solid #a9c3d8;display:flex;align-items:center;padding-left:8px;gap:7px}
      .y{color:#1f6fc0;font-weight:bold;font-size:14px;line-height:20px;width:16px}
    </style>
    <div class="bar">
      <span class="y">英</span>
      <svg width="130" height="16" fill="#1f78c8" style="margin-left:1px">
        <path d="M10 1a7 7 0 1 1-9 9c5 2 10-3 9-9z" transform="translate(0 1)"/>
        <circle cx="24" cy="4" r="2"/><path d="M31 6h2c0 3-1 5-2 6 0-2 .5-4 0-6z"/>
        <rect x="43" y="1" width="16" height="12" rx="1"/><path d="M45 4h12M45 7h12" stroke="#fff" stroke-dasharray="1.500 1" fill="none"/><path d="M47 10h8" stroke="#fff" fill="none"/>
        <g fill="#a6b3bf"><circle cx="73" cy="4" r="3.500"/><path d="M67 14c0-7 12-7 12 0z"/></g>
        <path d="M89 15l6-7c-1-4 2-7 6-6l-3 3 2 2 3-2c1 4-3 7-6 6l-6 6z"/>
      </svg>
    </div>
    <div class="z">Z</div>`;
  }
}

class GtjRibbon extends HTMLElement {
  connectedCallback() {
    const root = this.attachShadow({ mode: 'open' });
    root.innerHTML = `<style>
      :host{display:flex;height:98px;background:linear-gradient(#fff 35%,#e6e8ea);border-top:1px solid #e3e3e3;border-bottom:1px solid #9ea2a6;box-sizing:border-box}
    </style><slot></slot>`;
  }
}

class RbGroup extends HTMLElement {
  connectedCallback() {
    const root = this.attachShadow({ mode: 'open' });
    const w = this.getAttribute('w');
    const arrow = this.hasAttribute('arrow') ? '<i></i>' : '';
    root.innerHTML = `<style>
      :host{display:flex;flex-direction:column;width:${w}px;flex:none;height:96px;box-sizing:border-box;border-right:1px solid #cfd2d6}
      .c{display:flex;height:71px;padding-top:4px}
      .l{height:20px;padding-top:1px;display:flex;align-items:center;justify-content:center;gap:6px;line-height:20px;color:#333}
      i{display:block;border-left:4px solid transparent;border-right:4px solid transparent;border-top:4px solid #555}
    </style><div class="c"><slot></slot></div><div class="l">${this.getAttribute('label')}${arrow}</div>`;
  }
}

class RbCol extends HTMLElement {
  connectedCallback() {
    const root = this.attachShadow({ mode: 'open' });
    root.innerHTML = `<style>:host{display:flex;flex-direction:column;flex:none}</style><slot></slot>`;
  }
}

class RbItem extends HTMLElement {
  connectedCallback() {
    const root = this.attachShadow({ mode: 'open' });
    const lb = this.getAttribute('label');
    const gap = this.getAttribute('gap') || 3;
    root.innerHTML = `<style>
      :host{display:flex;align-items:center;height:23px;white-space:nowrap}
      .b{display:flex;align-items:center;gap:${gap}px;height:19px;${this.hasAttribute('pad')?'padding:0 6px 0 3px;':''}${this.hasAttribute('active')?'background:#c5d9f1;':''}${this.hasAttribute('disabled')?'color:#aaa;':'color:#2b2b2b;'}}
      i{display:block;margin-left:3px;border-left:3px solid transparent;border-right:3px solid transparent;border-top:4px solid #555}
    </style><div class="b"><gtj-icon n="${this.getAttribute('icon')}"></gtj-icon>${lb ? `<span>${lb}</span>` : ''}${this.hasAttribute('arrow') ? '<i></i>' : ''}</div>`;
  }
}

class RbBig extends HTMLElement {
  connectedCallback() {
    const root = this.attachShadow({ mode: 'open' });
    const n = this.getAttribute('icon');
    root.innerHTML = `<style>
      :host{display:flex;flex-direction:column;align-items:center;height:67px;padding-top:2px;box-sizing:border-box;margin-top:1px;flex:none;white-space:nowrap;${this.hasAttribute('active')?'background:#c5d9f1;':''}}
      .l{line-height:26px;${this.hasAttribute('disabled')?'color:#b0a89c;':''}}
      i{display:block;margin-top:0;border-left:4px solid transparent;border-right:4px solid transparent;border-top:4px solid #555}
    </style><gtj-icon n="${n}" s="30" v="30"></gtj-icon><div class="l">${this.getAttribute('label')}</div>${this.hasAttribute('arrow')?'<i></i>':''}`;
  }
}

class GtjCombo extends HTMLElement {
  connectedCallback() {
    const root = this.attachShadow({ mode: 'open' });
    root.innerHTML = `<style>
      :host{display:flex;align-items:center;justify-content:space-between;width:100px;height:21px;background:#fff;border:1px solid #b6babf;box-sizing:border-box;padding:0 7px 0 3px;flex:none;line-height:19px}
      i{display:block;border-left:3px solid transparent;border-right:3px solid transparent;border-top:4px solid #555}
    </style><slot></slot><i></i>`;
  }
}

class GtjFilterBar extends HTMLElement {
  connectedCallback() {
    const root = this.attachShadow({ mode: 'open' });
    root.innerHTML = `<style>
      :host{display:flex;align-items:flex-start;gap:5px;height:30px;padding:5px 0 0 3px;box-sizing:border-box;background:#c9cbcf;border-bottom:1px solid #989ba0;color:#2b2b2b}
      span{line-height:21px}
      gtj-icon{margin-top:2px}
      .n{margin-left:16px}
    </style><slot></slot><gtj-icon n="check"></gtj-icon><span>显示梁平法表格</span><span class="n">备注${P('：')}勾选即显示${P('，')}不勾选即隐藏</span>`;
  }
}

class GtjTree extends HTMLElement {
  connectedCallback() {
    const root = this.attachShadow({ mode: 'open' });
    root.innerHTML = `<style>
      :host{display:flex;flex-direction:column;width:170px;flex:none;background:#fff;position:relative;overflow:hidden;border-right:1px solid #c8cacd;box-sizing:border-box}
      .tb{height:27px;flex:none;display:flex;align-items:center;box-sizing:border-box;border-bottom:1px solid #c8cacd;padding-left:6px;background:#f2f2f2}
      .b{width:25px;height:24px;box-sizing:border-box;border:1px solid #73b2ec;border-radius:4px;background:#eaf3fc;display:flex;align-items:center;justify-content:center;margin-left:4px}
      .b:first-of-type{margin-left:89px}
      .list{padding-top:4px}
      .sb{position:absolute;left:156px;top:44px;width:8px;height:318px;background:#c8c8c8;border-radius:4px}
    </style>
    <div class="tb"><gtj-icon n="plus2"></gtj-icon><span class="b"><gtj-icon n="listv"></gtj-icon></span><span class="b"><gtj-icon n="cardv"></gtj-icon></span></div>
    <div class="list"><slot></slot></div><div class="sb"></div>`;
  }
}

class GtjTreeRow extends HTMLElement {
  connectedCallback() {
    const root = this.attachShadow({ mode: 'open' });
    const sub = this.hasAttribute('sub');
    root.innerHTML = `<style>
      :host{display:block;height:24px;padding-top:2px;box-sizing:border-box}
      .r{display:flex;align-items:center;gap:${sub?5:4}px;height:21px;padding-left:5px;line-height:21px;${sub?'margin-left:21px;':''}${this.hasAttribute('active')?'width:126px;background:#c5d9f1;':'width:fit-content;'}white-space:nowrap;color:#2b2b2b}
    </style><div class="r"><gtj-icon n="${this.getAttribute('icon')}"></gtj-icon><slot></slot></div>`;
  }
}

class GtjSide extends HTMLElement {
  connectedCallback() {
    const root = this.attachShadow({ mode: 'open' });
    root.innerHTML = `<style>:host{display:flex;flex-direction:column;width:262px;flex:none;gap:4px}</style><slot></slot>`;
  }
}

// shared strip + two tabs used by both side panels
const panelHead = (a, b) => `
  <div class="strip"><svg width="8" height="8" stroke="#777" stroke-width="1.300"><path d="M1 1l6 6M7 1L1 7"/></svg></div>
  <div class="tabs"><div class="t on">${a}</div><div class="t">${b}</div></div>`;
const panelCss = `
  :host{display:flex;flex-direction:column;box-sizing:border-box;border:1px solid #bfc3c9;border-top:0;background:#fff;overflow:hidden;position:relative}
  .strip{height:12px;flex:none;background:#d2d3d7;display:flex;align-items:center;justify-content:flex-end;padding-right:6px}
  .tabs{display:flex;height:22px;flex:none;background:#efefef;border-bottom:1px solid #bfc3c9;box-sizing:border-box}
  .t{width:65px;text-align:center;line-height:21px;font-weight:bold;color:#333;box-sizing:border-box}
  .t+.t{color:#999;background:#e2e2e2;border-left:1px solid #cfd1d4;border-right:1px solid #cfd1d4}
`;

class GtjCompPanel extends HTMLElement {
  connectedCallback() {
    const root = this.attachShadow({ mode: 'open' });
    const rows = ['KL62(1)','KL63(4)','KL65(9)','KL66(3)','KL69(9)','KL70(1)','KL12(3)','KL8(1)'];
    root.innerHTML = `<style>${panelCss}
      :host{height:263px;flex:none}
      .tool{height:29px;flex:none;background:#efefef;display:flex;align-items:center;padding-left:4px;border-bottom:1px solid #d8d8d8;position:relative}
      .tool span{margin-left:3px}
      .tool i{display:block;margin:0 12px 0 7px;border-left:3px solid transparent;border-right:3px solid transparent;border-top:4px solid #555}
      .more{position:absolute;right:2px;top:11px;display:flex;gap:1px}
      .more b{border-left:4px solid #555;border-top:3px solid transparent;border-bottom:3px solid transparent}
      .s{height:19px;flex:none;display:flex;align-items:center;justify-content:space-between;padding:0 4px 0 3px;border-bottom:1px solid #bfc3c9;color:#999;background:#fff}
      .list{flex:1;overflow:hidden;position:relative;padding-left:60px}
      .k{height:21px;line-height:21px;width:fit-content;padding:0 5px;color:#2b2b2b}
      .k.on{background:#c5d9f1;width:40px}
      .nd{padding:0;display:flex;align-items:center;gap:6px;height:21px;line-height:21px;white-space:nowrap}
      .nd i{display:block;border-left:5px solid transparent;border-bottom:5px solid #555}
      .sb{position:absolute;left:247px;top:91px;width:8px;height:23px;background:#c8c8c8;border-radius:4px}
    </style>
    ${panelHead('构件列表','图纸管理')}
    <div class="tool">
      <gtj-icon n="newc"></gtj-icon><span>新建</span><i></i>
      <gtj-icon n="delc"></gtj-icon><span>删除</span><span style="width:13px"></span>
      <gtj-icon n="copyc"></gtj-icon><span>复制</span>
      <div class="more"><b></b><b></b></div>
    </div>
    <div class="s"><span>搜索构件...</span><gtj-icon n="search"></gtj-icon></div>
    <div class="list">
      ${rows.map(r => `<div class="k${r=='KL8(1)'?' on':''}">${r}</div>`).join('')}
      <div class="nd" style="margin-left:-29px"><i></i><span>非框架梁</span></div>
      <div class="sb"></div>
    </div>`;
  }
}

class GtjPropPanel extends HTMLElement {
  connectedCallback() {
    const root = this.attachShadow({ mode: 'open' });
    const rows = [
      ['27','保护层厚...','(25)'],['28','汇总信息','(梁)'],['29','抗震等级','(三级抗震)'],
      ['30','锚固搭接','按默认锚固搭接计算'],['31','计算设置','按默认计算设置计算'],
      ['32','节点设置','按默认节点设置计算'],['33','搭接设置','按默认搭接设置计算',1],
    ];
    root.innerHTML = `<style>${panelCss}
      :host{flex:1}
      .g{display:grid;grid-template-columns:22px 85px 139px;grid-auto-rows:21px;width:246px}
      .g>div{box-sizing:border-box;border-bottom:1px solid #c9cbce;border-right:1px solid #d5d5d5;line-height:20px;white-space:nowrap;overflow:hidden;color:#2b2b2b}
      .g>.h{background:#efefef;text-align:center;color:#444}
      .g>.hv{background:#7ab8f5;color:#fff;text-align:center;border:0}
      .g>.c0{border:0;background:#fff}
      .no{background:#e9e9e9;text-align:center;color:#444;font-size:13px}
      .g>.no.on{background:#7ab8f5;color:#fff;font-weight:bold}
      .nm{padding-left:15px;position:relative}
      .nm::before{content:"";position:absolute;left:1px;top:9px;width:10px;height:1px;background:#999}
      .v{padding-left:3px}
      .g>.v.on{border:2px solid #707070;padding-left:1px;line-height:17px}
      .nm.top{padding-left:5px}.nm.top::before{display:none}
      .e{background:#e9e9e9}
      .up{position:absolute;left:249px;top:37px;border-left:4px solid transparent;border-right:4px solid transparent;border-bottom:5px solid #333}
      .hb{position:absolute;left:0;right:0;bottom:4px;height:10px}
      .hb i{position:absolute;left:4px;top:1px;border-right:5px solid #333;border-top:4px solid transparent;border-bottom:4px solid transparent}
      .hb b{position:absolute;left:24px;top:1px;width:190px;height:8px;border-radius:4px;background:#c8c8c8}
    </style>
    ${panelHead('属性列表','图层管理')}
    <div class="g" style="grid-template-rows:20px">
      <div class="c0"></div><div class="h">属性名称</div><div class="hv">属性值</div>
      ${rows.map(r => `<div class="no${r[3]?' on':''}">${r[0]}</div><div class="nm">${r[1]}</div><div class="v${r[3]?' on':''}">${r[2]}</div>`).join('')}
      <div class="no">34</div><div class="nm top">土建业务属性</div><div class="e"></div>
      <div class="no">41</div><div class="nm top">显示样式</div><div class="e"></div>
    </div>
    <div class="up"></div>
    <div class="hb"><i></i><b></b></div>`;
  }
}

class GtjCanvas extends HTMLElement {
  connectedCallback() {
    const root = this.attachShadow({ mode: 'open' });
    const seg = (x1, y1, x2, y2, c, w=1) => `<line x1="${x1}" y1="${y1}" x2="${x2}" y2="${y2}" stroke="${c}" stroke-width="${w}"/>`;
    const poly = (p, c) => `<polygon points="${p}" fill="none" stroke="${c}"/>`;
    // text laid along a start/end pair so every cad label keeps its measured run
    const lab = (t, x1, y1, x2, y2, c, fs=26, fw=100) => {
      const a = Math.atan2(y2-y1, x2-x1) * 180 / Math.PI;
      const len = Math.hypot(x2-x1, y2-y1).toFixed(1);
      const thin = fw < 200 ? `stroke="${c}" stroke-width=".35"` : '';
      return `<text transform="translate(${x1} ${y1}) rotate(${a.toFixed(2)})" textLength="${len}" lengthAdjust="spacingAndGlyphs" font-size="${fs}" font-weight="${fw}" fill="${c}" ${thin}>${t}</text>`;
    };
    const PK='#e87474', CY='#00e0e0', YL='#ffff00', TL='#00b0b0', W='#ffffff', PT='#f58a8a';
    root.innerHTML = `<style>
      :host{display:block;flex:1;position:relative;background:#000;overflow:hidden;min-width:0}
      svg{display:block;position:absolute;left:0;top:0}
      text{font-family:Roboto,"Liberation Sans",sans-serif}
    </style>
    <svg width="926" height="529" viewBox="440 168 926 529">
      ${seg(790,165,1390,535,CY,21)}${seg(1200,168,1380,276,CY,16)}${seg(1343,168,1194,412,CY,19)}
      ${seg(790,165,1390,535,PK,19)}${seg(1200,168,1380,276,PK,14)}${seg(1343,168,1194,412,PK,17)}
      ${seg(950,168,900,250,'#3a7fe0',18)}${seg(950,168,900,250,PK,16)}
      ${seg(802,170,1390,533,'#ff0000')}${seg(1200,168,1380,276,'#a01818')}${seg(950,168,900,250,'#ff0000')}
      ${seg(548,348,900,570,CY)}${seg(585,347,920,560,CY)}
      ${seg(607,313,783,422,YL)}${seg(988,375,892,532,YL)}${seg(632,482,712,532,W,1.6)}
      <polygon points="900,207 942,233 915,273 875,248" fill="#8000ff"/>
      ${seg(906,240,720,540,'#39a0e8',20)}${seg(906,240,720,540,YL,18)}
      <polygon points="892,230 925,230 907,260" fill="${YL}"/>
      ${seg(905,222,918,246,'#ff4040')}${seg(890,237,930,237,'#ff4040')}
      <polygon points="897,231 910,229 908,246" fill="none" stroke="#4aa3e8"/>
      ${poly('858,240 878,253 853,292 833,278',W)}${poly('737,428 762,440 737,478 717,467',W)}${poly('793,462 812,473 788,512 770,500',W)}
      ${seg(1295,408,1322,608,YL)}${seg(1283,605,1366,593,CY)}${seg(1283,622,1366,610,CY)}${seg(1283,615,1366,603,'#800000')}
      ${seg(440,362,447,348,YL)}

      <circle cx="810" cy="181" r="12" fill="none" stroke="#0a8a0a"/>
      <circle cx="945" cy="181" r="12" fill="none" stroke="#0a8a0a"/>
      ${lab('2-9',800,187,821,187,W,17,400)}${lab('2-B',933,187,958,187,W,17,400)}

      ${lab('KL8(1) 200x600',624,325,705,205,TL)}
      ${lab('C8@100/200(2)',651,340,730,230,TL)}
      ${lab('2C18;2C25+1C22(-1)',681,360,787,203,TL)}
      ${lab('N4C10',712,378,752,328,TL)}
      ${lab('(-2295/-3285)',746,397,834,270,TL)}

      ${lab('2C18+1C14',828,337,880,255,PT,22)}
      ${lab('3C16',940,247,976,270,PT,22)}
      ${lab('3C16+2C14',682,396,768,448,PT,24)}
      ${lab('2C16',790,460,824,430,PT,24)}
      ${lab('N4C10',822,488,856,443,PT,24)}
      ${seg(815,480,834,484,PT)}
      ${lab('2C18',1300,272,1340,297,PT,24)}
      ${lab('3C14',1216,328,1247,298,PT,22)}
      ${lab('2C14',1254,354,1280,316,PT,22)}
      ${lab('C6@100(2)',1267,388,1322,320,PT,22)}
      ${lab('2C20',1156,433,1197,456,PT,24)}

      ${lab('KL8(1) [7423] 200*600',632,475,732,330,W,20,300)}
      ${lab('C8@100/200(2) 2C18',652,495,749,350,W,20,300)}
      ${lab('N4C10',673,509,706,464,W,20,300)}

      ${lab('L 51(1) 250x600',441,369,560,438,YL)}
      ${lab('6@200(2)',438,392,505,436,YL)}
      ${lab('6;2C22(-2)/4C25(-1)',438,436,603,532,YL)}
      ${lab('L 50(1) 200x600',983,390,1103,460,YL)}
      ${lab('C6@200(2)',965,420,1046,468,YL)}
      ${lab('2C14;2C14',945,450,1025,498,YL)}
      ${lab('G4C8',927,476,975,506,YL)}
      ${lab('KL67(1)',1300,426,1366,408,YL)}
      ${lab('C6@100',1306,466,1366,450,YL)}
      ${lab('2C18;3',1309,503,1366,488,YL)}
      ${lab('G4C8',1318,536,1358,518,YL)}
      ${lab('2C18+1C1',1286,602,1366,588,PT)}
      ${lab('2C20',1334,700,1368,675,PT)}
    </svg>
    <slot></slot>`;
  }
}

class GtjToolPanel extends HTMLElement {
  connectedCallback() {
    const root = this.attachShadow({ mode: 'open' });
    const btn = (t, a) => `<div class="b${a?' a':''}"><span>${t}</span>${a?'<i></i>':''}</div>`;
    root.innerHTML = `<style>
      :host{position:absolute;left:0;top:0;width:145px;height:179px;box-sizing:border-box;background:#1f5083;border:1px solid #2a6fb0;border-top:0;display:flex;flex-direction:column;color:#e8eef5}
      .h{height:13px;flex:none;background:#183c62;display:flex;align-items:center;justify-content:flex-end;padding-right:4px}
      .l{display:flex;flex-direction:column;gap:6px;padding:7px 6px 0}
      .b{height:26px;box-sizing:border-box;border:1px solid #1a3d63;border-radius:3px;background:#1f5083;display:flex;align-items:center;justify-content:center;position:relative;line-height:24px;white-space:nowrap}
      .b.a span{margin-right:4px}
      .b i{position:absolute;right:5px;top:10px;border-left:4px solid transparent;border-right:4px solid transparent;border-top:4px solid #fff}
    </style>
    <div class="h"><svg width="8" height="8" stroke="#bcd0e5" stroke-width="1.400"><path d="M1 1l6 6M7 1L1 7"/></svg></div>
    <div class="l">${btn('提取边线')}${btn('自动提取标注',1)}${btn('点选识别梁',1)}${btn('编辑支座')}${btn('点选识别原位标注',1)}</div>`;
  }
}

class GtjViewBar extends HTMLElement {
  connectedCallback() {
    const root = this.attachShadow({ mode: 'open' });
    root.innerHTML = `<style>
      :host{position:absolute;right:0;top:0;width:32px;height:238px;background:rgba(128,128,128,.65);display:block}
      svg{position:absolute;left:0;top:0}
      .g{position:absolute;left:14px;top:115px;width:44px;height:44px;box-sizing:border-box;border-radius:50%;background:radial-gradient(#55d06c,#32b24e);border:2px solid #e8f2ea;color:#fff;font:bold 13px/40px "Liberation Sans",sans-serif;padding-left:3px}
    </style>
    <svg width="32" height="238" fill="none" stroke="#2c2f33" stroke-width="1.200">
      <ellipse cx="14" cy="24" rx="8" ry="8" fill="#555"/><circle cx="20" cy="20" r="4" fill="#666"/><ellipse cx="14" cy="27" rx="10" ry="4" fill="#4a4a4a"/>
      <path d="M5 47l5-5h16v17l-5 4H5zM5 47h16v16M21 47l5-5" fill="#5c5c5c"/>
      <text x="8" y="60" font-size="8" fill="#222" stroke="none" font-family="Liberation Sans">3D</text>
      <path d="M5 84l5-5h16v17l-5 4H5zM5 84h16v16M21 84l5-5" fill="rgba(190,170,170,.4)"/>
      <path d="M13 104h8l-4 3z" fill="#333" stroke="none"/>
      <path d="M5 122l5-5h16v17l-5 4H5z" fill="#5c5c5c"/>
      <path d="M6 154h20v20H6zM6 158h20M10 158v16M14 158v16M18 158v16M22 158v16" fill="#6a6a6a"/>
      <path d="M13 180h8l-4 3z" fill="#222" stroke="none"/>
      <path d="M5 190h22" stroke="#333"/>
      <path d="M5 199h22v21H5zM16 199v21M8 204h5M19 204h5M8 209h5M19 209h5M8 214h5M19 214h5" fill="#5c5c5c"/>
    </svg>
    <div class="g">75</div>`;
  }
}

class GtjStatus extends HTMLElement {
  connectedCallback() {
    const root = this.attachShadow({ mode: 'open' });
    root.innerHTML = `<style>
      :host{display:flex;align-items:center;height:30px;padding-top:1px;background:#dcdde0;color:#333;white-space:nowrap;border-top:1px solid #c4c6c9;box-sizing:border-box}
      span{display:block}
      .fps{margin-left:auto;margin-right:12px;letter-spacing:.55px}
    </style>
    <span style="width:207px;padding-left:2px;letter-spacing:.6px">X = 269517 Y = 1162371</span><span style="width:79px">层高${P('：')}3.9</span><span>标高${P('：')}-13.5~-9.</span>
    <span class="fps">Shif58.8235 FPS</span>`;
  }
}

class GtjTaskbar extends HTMLElement {
  connectedCallback() {
    const root = this.attachShadow({ mode: 'open' });
    root.innerHTML = `<style>
      :host{display:flex;height:9px;overflow:hidden;background:linear-gradient(#7c6250,#5f4a3c);border-top:1px solid #e8e4e0;box-sizing:border-box;position:relative}
      .s{flex:none;height:9px}
      .p{width:240px;background:#3e4a52;display:flex;gap:30px;padding-left:14px;box-sizing:border-box}
      .p b{display:block;width:22px;height:14px;border-radius:50%}
      .w{width:58px;margin-right:3px;background:#d9d6d2;border-radius:2px 2px 0 0;position:relative}
      .w b{position:absolute;left:14px;top:1px;width:28px;height:10px;border-radius:5px;background:#5ba8f5}
      .clk{position:absolute;left:1268px;top:-7px;color:#fff;line-height:14px;font-size:13px;white-space:nowrap}
      .tray{position:absolute;left:1352px;top:0;width:14px;height:9px;background:#a9a29c}
    </style>
    <div class="s p"><b style="background:#8fb6d0"></b><b style="background:#b7c65a"></b><b style="background:#4f9fd8"></b><b style="background:#8a8a80"></b></div>
    <div class="s w"><b style="background:#9eb4c8"></b></div><div class="s w"><b style="background:#2f79c4"></b></div><div class="s w"><b></b></div>
    <div class="clk">下午 1:51</div><div class="tray"></div>`;
  }
}

class GtjTableWindow extends HTMLElement {
  connectedCallback() {
    const root = this.attachShadow({ mode: 'open' });
    const acts = [['复制跨数据'],['粘贴跨数据',1],['输入当前列数据'],['删除当前列数据'],['页面设置'],['调换起始跨'],['悬臂钢筋代号']];
    root.innerHTML = `<style>
      :host{position:absolute;left:376px;top:532px;width:888px;height:196px;box-sizing:border-box;border:5px solid #3a3f45;border-bottom:0;background:#fff;display:flex;flex-direction:column;overflow:hidden}
      .strip{height:12px;flex:none;background:#d2d3d7}
      .title{height:22px;flex:none;background:#efefef;border-top:1px solid #c4c6ca;border-bottom:1px solid #c4c6ca;box-sizing:border-box;line-height:20px;padding-left:8px;font-weight:bold;color:#777}
      .acts{height:30px;flex:none;background:#efefef;display:flex;align-items:center;padding-left:5px;gap:14px;white-space:nowrap;border-bottom:1px solid #c9cbce}
      .acts .off{color:#aaa}
      .g{display:grid;grid-template-columns:8px 60px 62px 61px 81px 80px 144px 102px 1fr;grid-template-rows:25px 26px 42px;flex:none}
      .g>div{box-sizing:border-box;border-right:1px solid #d0d2d5;border-bottom:1px solid #d0d2d5;background:#efefef;display:flex;align-items:center;justify-content:center;color:#444;white-space:nowrap;overflow:hidden}
      .g>.w{background:#fff;color:#2b2b2b;justify-content:flex-start;padding-left:4px;border-bottom:1px solid #c4c6ca}
      .g>.on{background:#7ab8f5;color:#fff;border-color:#fff}
      .g>.rh{background:#7ab8f5;color:#fff;flex-direction:column;font-weight:bold;padding:0;border:0;font-size:11px;line-height:17px}
      .g>.cur{background:#fff;color:#2b2b2b;border:2px solid #4e97e8;justify-content:space-between;padding:0 2px 0 6px;position:relative;overflow:visible}
      .pt{width:16px;height:34px;box-sizing:border-box;border:1px solid #7ab8f5;border-radius:3px;background:linear-gradient(#fff,#dfe6ef);color:#4a7fc0;text-align:center;line-height:26px;font-weight:bold}
      .dot{position:absolute;right:-4px;bottom:-4px;width:5px;height:5px;background:#4e97e8}
      .fill{flex:1;position:relative;background:#fff}
      .fill::before{content:"";position:absolute;left:0;top:0;width:8px;height:20px;background:#efefef}
      .lb{position:absolute;left:2px;bottom:2px;border-right:5px solid #222;border-top:4px solid transparent;border-bottom:4px solid transparent}
      .rb{position:absolute;right:4px;bottom:2px;border-left:5px solid #222;border-top:4px solid transparent;border-bottom:4px solid transparent}
      .th{position:absolute;left:336px;bottom:2px;width:236px;height:8px;background:#c8c8c8;border-radius:4px}
    </style>
    <div class="strip"></div>
    <div class="title">梁平法表格</div>
    <div class="acts">${acts.map(a => `<span class="${a[1]?'off':''}">${a[0]}</span>`).join('')}</div>
    <div class="g">
      <div style="grid-row:1/3;background:#fff;border:0"></div>
      <div style="grid-row:1/3">位置</div><div style="grid-row:1/3">名称</div><div style="grid-row:1/3">跨号</div>
      <div style="grid-column:5/7;justify-content:flex-start;padding-left:15px">上部钢筋</div>
      <div class="on" style="grid-column:7/9">下部钢筋</div><div style="background:#efefef"></div>
      <div>跨中钢筋</div><div>右支座钢筋</div><div class="on">下通长筋</div><div style="justify-content:flex-start;padding-left:26px">下部非通长筋</div><div></div>
      <div class="rh"><span>1</span><span>2</span></div>
      <div class="w" style="display:block;line-height:17px;padding:3px 0 0 4px">&lt;1-0,1-0;<br>2-0,2-0&gt;</div>
      <div class="w">KL8(1)</div><div class="w">1</div><div class="w"></div><div class="w"></div>
      <div class="cur"><span>2c25+1c22(-1)</span><span class="pt">...</span><span class="dot"></span></div>
      <div class="w"></div><div class="w"></div>
    </div>
    <div class="fill"><i class="lb"></i><i class="th"></i><i class="rb"></i></div>`;
  }
}

class GtjDialog extends HTMLElement {
  connectedCallback() {
    const root = this.attachShadow({ mode: 'open' });
    root.innerHTML = `<style>
      :host{position:absolute;left:922px;top:494px;width:361px;height:211px;box-sizing:border-box;background:#f0f0f0;border:1px solid #c5cbd8;border-top:0;display:flex;flex-direction:column;color:#222}
      .h{height:27px;flex:none;margin:0 -1px;background:#2c7fe0;color:#fff;display:flex;align-items:center;justify-content:space-between;padding:0 10px 0 8px;line-height:27px}
      .b{flex:1;display:flex;padding:18px 0 0 24px;gap:10px}
      .i{width:30px;height:30px;border-radius:50%;background:#2c7fe0;color:#fff;flex:none;margin-top:2px;font:italic bold 25px/30px "Liberation Serif",serif;text-align:center}
      .t{width:262px;line-height:26px;letter-spacing:.2px;word-spacing:1.500px;white-space:nowrap}
      .f{height:42px;flex:none;margin:0 9px;border-top:1px solid #c4c6ca;display:flex;justify-content:flex-end;align-items:flex-start;padding:6px 2px 0 0}
      .ok{width:78px;height:26px;border-radius:3px;background:#2c7fe0;color:#fff;text-align:center;line-height:26px}
    </style>
    <div class="h"><span>提示</span><svg width="10" height="10" stroke="#fff" stroke-width="1.700"><path d="M1 1l8 8M9 1L1 9"/></svg></div>
    <div class="b"><div class="i">i</div><div class="t">钢筋输入格式错误<br>此框支持${P('：')}数量 + 级别 + 直径${P('，')}如${P('：')}4C25 或<br>2C22 或 2C22+2C25${P('；')}4C12 2/2 或<br>2C12/2C16。</div></div>
    <div class="f"><div class="ok">确定</div></div>`;
  }
}

const defs = {
  'gtj-icon': GtjIcon, 'gtj-app': GtjApp, 'gtj-title-bar': GtjTitleBar, 'gtj-ime': GtjIme, 'gtj-ribbon': GtjRibbon,
  'rb-group': RbGroup, 'rb-col': RbCol, 'rb-item': RbItem, 'rb-big': RbBig, 'gtj-combo': GtjCombo,
  'gtj-filter-bar': GtjFilterBar, 'gtj-tree': GtjTree, 'gtj-tree-row': GtjTreeRow, 'gtj-side': GtjSide,
  'gtj-comp-panel': GtjCompPanel, 'gtj-prop-panel': GtjPropPanel, 'gtj-canvas': GtjCanvas, 'gtj-tool-panel': GtjToolPanel,
  'gtj-view-bar': GtjViewBar, 'gtj-status': GtjStatus, 'gtj-taskbar': GtjTaskbar, 'gtj-table-window': GtjTableWindow, 'gtj-dialog': GtjDialog,
};
for (const k in defs) customElements.define(k, defs[k]);
</script>
</body>
</html>
